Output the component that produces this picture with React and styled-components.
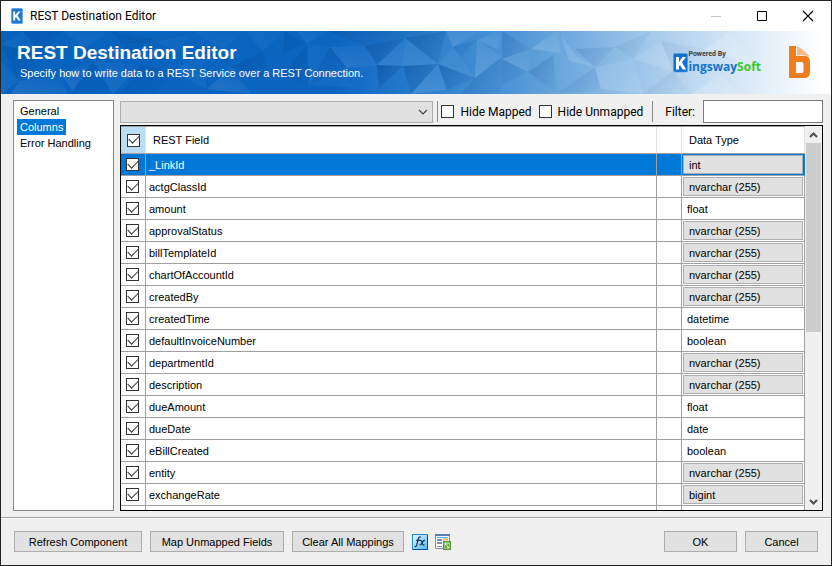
import { useState } from "react";
import styled, { createGlobalStyle } from "styled-components";

const sans = `"Liberation Sans", Arial, sans-serif`;
const segoe = `Roboto, "Segoe UI", sans-serif`;

const pages = ["General", "Columns", "Error Handling"];

const initialFields = [
  { name: "_LinkId", type: "int", sized: true },
  { name: "actgClassId", type: "nvarchar (255)", sized: true },
  { name: "amount", type: "float" },
  { name: "approvalStatus", type: "nvarchar (255)", sized: true },
  { name: "billTemplateId", type: "nvarchar (255)", sized: true },
  { name: "chartOfAccountId", type: "nvarchar (255)", sized: true },
  { name: "createdBy", type: "nvarchar (255)", sized: true },
  { name: "createdTime", type: "datetime" },
  { name: "defaultInvoiceNumber", type: "boolean" },
  { name: "departmentId", type: "nvarchar (255)", sized: true },
  { name: "description", type: "nvarchar (255)", sized: true },
  { name: "dueAmount", type: "float" },
  { name: "dueDate", type: "date" },
  { name: "eBillCreated", type: "boolean" },
  { name: "entity", type: "nvarchar (255)", sized: true },
  { name: "exchangeRate", type: "bigint", sized: true },
];

// points, then a white (positive) or navy (negative) opacity
const facets = [
  ["0,14 22,0 40,22", 0.05],
  ["0,14 40,22 18,50", -0.2],
  ["0,63 18,50 0,30", 0.08],
  ["18,50 60,44 66,63 10,63", 0.1],
  ["22,0 62,0 40,22", -0.22],
  ["60,44 92,30 72,60", 0.1],
  ["72,60 92,30 112,63", -0.2],
  ["62,0 110,0 84,16", 0.06],
  ["92,30 140,34 112,63", 0.08],
  ["110,0 150,8 130,26", -0.2],
  ["140,34 172,40 152,63 120,63", -0.2],
  ["172,40 200,22 206,58", 0.08],
  ["150,8 192,0 176,20", 0.05],
  ["118,12 200,0 150,12", -0.3],
  ["206,58 230,36 250,63", 0.1],
  ["192,0 244,0 222,18", 0.05],
  ["200,22 222,18 230,36", -0.25],
  ["230,36 262,20 270,52", -0.25],
  ["244,0 284,0 262,20", 0.06],
  ["284,0 306,13 282,22", -0.25],
  ["296,0 326,0 306,13", 0.08],
  ["306,13 329,16 352,56 308,54", 0.05],
  ["280,45 306,14 308,56", -0.3],
  ["329,16 346,37 308,55", -0.25],
  ["329,16 364,15 346,37", 0.12],
  ["326,0 364,15 440,0", -0.2],
  ["364,15 404,7 376,34", -0.35],
  ["364,15 376,34 346,37", 0.08],
  ["376,34 404,7 402,35", 0.1],
  ["376,34 402,35 378,57", -0.35],
  ["404,7 437,33 402,35", 0.1],
  ["404,7 445,0 437,33", -0.35],
  ["402,35 437,33 410,63", -0.3],
  ["437,33 446,59 410,63", 0.14],
  ["445,0 480,0 452,16", 0.14],
  ["452,16 476,9 460,26", -0.2],
  ["437,33 474,47 446,59", -0.3],
  ["452,16 474,47 437,33", 0.08],
  ["476,9 501,0 496,18", 0.14],
  ["476,9 501,26 474,47", 0.14],
  ["474,47 501,26 501,63 460,63", -0.2],
  ["501,0 530,18 501,28", -0.2],
  ["501,28 530,18 527,41", 0.14],
  ["527,41 501,54 501,28", -0.15],
  ["530,18 556,0 560,22", 0.18],
  ["527,41 552,24 556,63", -0.2],
  ["560,4 574,24 594,36 568,30", 0.18],
  ["594,36 614,16 574,18", -0.15],
  ["556,63 594,36 600,58", -0.15],
  ["594,36 632,28 642,63 600,58", 0.18],
  ["614,16 650,0 632,28", -0.1],
  ["632,28 660,10 672,40", 0.18],
  ["642,63 672,40 690,63", -0.1],
  ["660,10 704,18 672,40", -0.08],
  ["704,18 730,0 752,34", 0.25],
  ["690,63 720,44 740,63", 0.25],
];

export default function App() {
  const [page, setPage] = useState("Columns");
  const [checked, setChecked] = useState(initialFields.map(() => true));
  const [selected, setSelected] = useState(0);
  const allChecked = checked.every(Boolean);

  function toggle(index) {
    setChecked(checked.map((value, i) => (i === index ? !value : value)));
  }

  return (
    <>
      <GlobalStyle />
      <Window>
        <TitleBar>
          <AppIcon />
          <WindowTitle>REST Destination Editor</WindowTitle>
          <WindowButton aria-label="Minimize" $color="#c4c4c4">
            <svg width="12" height="12" viewBox="0 0 12 12">
              <path d="M1 6.5H11" stroke="currentColor" />
            </svg>
          </WindowButton>
          <WindowButton aria-label="Maximize">
            <svg width="12" height="12" viewBox="0 0 12 12">
              <path d="M1.5 1.5H10.5V10.5H1.5Z" stroke="currentColor" fill="none" />
            </svg>
          </WindowButton>
          <WindowButton aria-label="Close">
            <svg width="12" height="12" viewBox="0 0 12 12">
              <path d="M1 1L11 11M11 1L1 11" stroke="currentColor" strokeWidth="1.2" />
            </svg>
          </WindowButton>
        </TitleBar>

        <Banner>
          <BannerArt viewBox="0 0 830 63" preserveAspectRatio="none" aria-hidden="true">
            <defs>
              <linearGradient id="light" x1="0" x2="1" y1="1" y2="0">
                <stop offset="0" stopColor="#ffffff" />
                <stop offset="1" stopColor="#ffffff" stopOpacity="0.1" />
              </linearGradient>
              <linearGradient id="dark" x1="0" x2="1" y1="0" y2="1">
                <stop offset="0" stopColor="#003a80" />
                <stop offset="1" stopColor="#003a80" stopOpacity="0.1" />
              </linearGradient>
            </defs>
            {facets.map(([points, tone]) => (
              <polygon
                key={points}
                points={points}
                fill={tone > 0 ? "url(#light)" : "url(#dark)"}
                opacity={Math.abs(tone)}
              />
            ))}
          </BannerArt>
          <BannerText>
            <h1>REST Destination Editor</h1>
            <p>Specify how to write data to a REST Service over a REST Connection.</p>
          </BannerText>
          <Brand>
            <BrandMark />
            <div>
              <Powered>Powered By</Powered>
              <BrandName>
                ingsway<span>Soft</span>
              </BrandName>
            </div>
          </Brand>
          <BillLogo />
        </Banner>

        <Main>
          <PageList>
            {pages.map((name) => (
              <li key={name}>
                <PageButton $active={name === page} onClick={() => setPage(name)}>
                  {name}
                </PageButton>
              </li>
            ))}
          </PageList>

          <Content>
            <Toolbar>
              <SelectBox>
                <select aria-label="Source" />
                <svg width="10" height="6" viewBox="0 0 10 6">
                  <path d="M1 1L5 5L9 1" stroke="#444" strokeWidth="1.2" fill="none" />
                </svg>
              </SelectBox>
              <Divider />
              <CheckLabel>
                <CheckBox />
                Hide Mapped
              </CheckLabel>
              <CheckLabel>
                <CheckBox />
                Hide Unmapped
              </CheckLabel>
              <Divider $spaced />
              <FilterLabel htmlFor="filter">Filter:</FilterLabel>
              <FilterInput id="filter" />
            </Toolbar>

            <GridFrame>
              <GridArea>
                <Grid>
                  <colgroup>
                    <col width="25" />
                    <col />
                    <col width="25" />
                    <col width="123" />
                  </colgroup>
                  <thead>
                    <tr>
                      <HeadCell $picked>
                        <CheckBox
                          aria-label="Select all"
                          checked={allChecked}
                          onChange={() => setChecked(checked.map(() => !allChecked))}
                        />
                      </HeadCell>
                      <HeadCell>REST Field</HeadCell>
                      <HeadCell />
                      <HeadCell>Data Type</HeadCell>
                    </tr>
                  </thead>
                  <tbody>
                    {initialFields.map((field, index) => (
                      <Row
                        key={field.name}
                        $selected={index === selected}
                        onClick={() => setSelected(index)}
                      >
                        <CheckCell>
                          <CheckBox
                            aria-label={field.name}
                            checked={checked[index]}
                            onChange={() => toggle(index)}
                          />
                        </CheckCell>
                        <Cell>{field.name}</Cell>
                        <Cell />
                        <TypeCell $sized={field.sized}>
                          {field.sized ? <TypeButton>{field.type}</TypeButton> : field.type}
                        </TypeCell>
                      </Row>
                    ))}
                    <Row>
                      <Cell />
                      <Cell />
                      <Cell />
                      <Cell />
                    </Row>
                  </tbody>
                </Grid>
              </GridArea>
              <ScrollBar>
                <ScrollButton aria-label="Scroll up">
                  <svg width="9" height="6" viewBox="0 0 9 6">
                    <path d="M1 5L4.500 1.500L8 5" stroke="#505050" strokeWidth="2" fill="none" />
                  </svg>
                </ScrollButton>
                <ScrollTrack>
                  <ScrollThumb />
                </ScrollTrack>
                <ScrollButton aria-label="Scroll down">
                  <svg width="9" height="6" viewBox="0 0 9 6">
                    <path d="M1 1L4.500 4.500L8 1" stroke="#505050" strokeWidth="2" fill="none" />
                  </svg>
                </ScrollButton>
              </ScrollBar>
            </GridFrame>
          </Content>
        </Main>

        <Footer>
          <Button $width={128}>Refresh Component</Button>
          <Button $width={134}>Map Unmapped Fields</Button>
          <Button $width={112}>Clear All Mappings</Button>
          <IconGroup>
            <IconButton aria-label="Expression">
              <FxIcon />
            </IconButton>
            <IconButton aria-label="Mapping document">
              <DocumentIcon />
            </IconButton>
          </IconGroup>
          <Button $width={73}>OK</Button>
          <Button $width={73}>Cancel</Button>
        </Footer>
      </Window>
    </>
  );
}

function CheckBox(props) {
  return <Box type="checkbox" {...props} />;
}

function AppIcon() {
  return (
    <svg width="12" height="16" viewBox="0 0 12 16">
      <rect x="0.300" y="0.300" width="11.400" height="15.400" rx="1.500" fill="#1979d2" stroke="#7fb6e8" strokeWidth="0.600" />
      <path d="M2.200 3.500H4.200V7.200L7.200 3.500H9.600L6.500 7.500L9.800 12.500H7.300L5 9L4.200 10V12.500H2.200Z" fill="#fff" />
    </svg>
  );
}

function BrandMark() {
  return (
    <svg width="15" height="20" viewBox="0 0 15 20">
      <rect x="0.500" y="0.500" width="14" height="18.500" rx="1.500" fill="#1272cf" stroke="#4d97dd" strokeWidth="0.600" />
      <path d="M3 4H6V9L9.500 4H13L9 9.500L13.200 16.500H9.700L7 12L6 13.200V16.500H3Z" fill="#fff" />
    </svg>
  );
}

function BillLogo() {
  return (
    <BillMark width="21" height="33" viewBox="0 0 21 33">
      <path
        fillRule="evenodd"
        fill="#f07d1a"
        d="M0 0H7V10H17Q21 11 21 15.500V26Q21 32 15 32H0ZM7 16V27H12.500Q14.500 27 14.500 25.500V18Q14.500 16 12.500 16Z"
      />
      <path d="M8 0.500Q12 1 21 10.500Q14 8 8 9.500Z" fill="#f9b98a" />
    </BillMark>
  );
}

function FxIcon() {
  return (
    <svg width="16" height="16" viewBox="0 0 16 16">
      <defs>
        <linearGradient id="fx" x1="0" x2="1" y1="0" y2="1">
          <stop offset="0" stopColor="#e8fbff" />
          <stop offset="1" stopColor="#4fb6f2" />
        </linearGradient>
      </defs>
      <rect x="0.500" y="0.500" width="15" height="15" fill="url(#fx)" stroke="#2b86d0" />
      <path d="M15.500 1V15.500H1" stroke="#0b4a9c" fill="none" />
      <path
        d="M8.800 3.200Q7 2.200 6.200 5L4.700 11Q4 13.200 2.600 12.400M4.200 6.300H8M8 6.500Q9.300 5.900 9.800 7.500L10.500 10Q11 11.500 12.400 10.500M12.900 6.400Q11.500 6.200 10.200 8.500Q9 11.200 7.500 10.700"
        stroke="#17325c"
        strokeWidth="1.200"
        fill="none"
      />
    </svg>
  );
}

function DocumentIcon() {
  return (
    <svg width="16" height="16" viewBox="0 0 16 16">
      <path d="M0.500 0.500H14.500V14.500H0.500Z" fill="#fff" stroke="#8192ad" />
      <path d="M0 1H15" stroke="#5c7dac" strokeWidth="2" />
      <path d="M2 3.500H13" stroke="#5ea7e0" />
      <path d="M2 6H7M2 9H7" stroke="#6f8db8" strokeWidth="2" />
      <path d="M2 12.500H7" stroke="#7e96b8" />
      <path d="M8 5.500H13" stroke="#f0a848" strokeWidth="2" />
      <rect x="8.800" y="7.800" width="6.500" height="7.500" fill="#e9f6df" stroke="#55982d" strokeWidth="1.500" />
      <path d="M10.500 13.500L13.500 10M11 10H13.500V12.500M10.500 11V13.500H12.500" stroke="#5aa52e" fill="none" />
    </svg>
  );
}

const GlobalStyle = createGlobalStyle`
  * {
    box-sizing: border-box;
  }
  body {
    margin: 0;
    font-family: ${sans};
    font-size: 11px;
    color: #000000;
  }
  button, input, select {
    font: inherit;
    color: inherit;
    margin: 0;
    padding: 0;
    border-radius: 0;
  }
`;

const Window = styled.div`
  height: 100vh;
  display: flex;
  flex-direction: column;
  background-color: #f0f0f0;
  border: 1px solid #222222;
`;

const TitleBar = styled.header`
  height: 30px;
  flex-shrink: 0;
  display: flex;
  align-items: center;
  padding-left: 10px;
  background-color: #ffffff;
`;

const WindowTitle = styled.span`
  flex: 1;
  margin-left: 7px;
  font-family: ${segoe};
  font-size: 12px;
`;

const WindowButton = styled.button`
  width: 46px;
  height: 28px;
  display: flex;
  align-items: center;
  justify-content: center;
  border: none;
  background: none;
  color: ${(props) => props.$color || "#000000"};
`;

const Banner = styled.section`
  height: 63px;
  flex-shrink: 0;
  position: relative;
  display: flex;
  align-items: center;
  padding: 0 21px 0 16px;
  background: linear-gradient(
    90deg,
    #0762bd 0%,
    #0b66c2 40%,
    #287bcb 50%,
    #4f96d6 62%,
    #82b5e3 72%,
    #b8d5ef 82%,
    #dfecf8 91%,
    #ffffff 99%
  );
`;

const BannerArt = styled.svg`
  position: absolute;
  inset: 0;
  width: 100%;
  height: 100%;
`;

const BannerText = styled.div`
  position: relative;
  flex: 1;
  color: #ffffff;
  h1 {
    margin: 0;
    font-size: 19px;
    line-height: 20px;
  }
  p {
    margin: 2px 0 2px 3px;
    line-height: 16px;
  }
`;

const Brand = styled.div`
  position: relative;
  display: flex;
  align-items: center;
  margin-right: 28px;
  font-weight: 700;
`;

const BillMark = styled.svg`
  position: relative;
`;

const Powered = styled.div`
  font-family: ${segoe};
  font-size: 7px;
  line-height: 8px;
  color: #3c3c3c;
`;

const BrandName = styled.div`
  font-family: "Open Sans", "Segoe UI", sans-serif;
  font-size: 12px;
  line-height: 17px;
  color: #1272cf;
  span {
    color: #3fc51f;
  }
`;

const Main = styled.main`
  flex: 1;
  min-height: 0;
  display: flex;
  gap: 6px;
  padding: 6px 8px 6px 12px;
`;

const PageList = styled.ul`
  width: 101px;
  margin: 0;
  padding: 2px 3px;
  list-style: none;
  background-color: #ffffff;
  border: 1px solid #828790;
`;

const PageButton = styled.button`
  display: block;
  height: 16px;
  padding: 0 3px;
  border: none;
  background-color: ${(props) => (props.$active ? "#0078d7" : "transparent")};
  color: ${(props) => (props.$active ? "#ffffff" : "#000000")};
`;

const Content = styled.div`
  flex: 1;
  min-width: 0;
  display: flex;
  flex-direction: column;
  gap: 2px;
`;

const Toolbar = styled.div`
  height: 23px;
  flex-shrink: 0;
  display: flex;
  align-items: center;
`;

const SelectBox = styled.div`
  flex: 1;
  height: 22px;
  display: flex;
  align-items: center;
  margin-right: 4px;
  padding-right: 4px;
  background-color: #e1e1e1;
  border: 1px solid #adadad;
  select {
    flex: 1;
    min-width: 0;
    height: 20px;
    appearance: none;
    border: none;
    background: none;
  }
`;

const Divider = styled.div`
  width: 1px;
  height: 21px;
  margin-left: ${(props) => (props.$spaced ? 5 : 0)}px;
  background-color: #8c8c8c;
`;

const CheckLabel = styled.label`
  display: flex;
  align-items: center;
  gap: 6px;
  margin-left: 3px;
  margin-right: 4px;
  font-family: ${segoe};
  font-size: 12px;
`;

const Box = styled.input`
  appearance: none;
  width: 13px;
  height: 13px;
  display: grid;
  place-items: center;
  background-color: #ffffff;
  border: 1px solid #333333;
  &:checked::after {
    content: "";
    width: 5px;
    height: 9px;
    margin-top: -4px;
    border: solid #333333;
    border-width: 0 1px 1px 0;
    transform: rotate(45deg);
  }
`;

const FilterLabel = styled.label`
  margin: 0 8px 0 12px;
  font-family: ${segoe};
  font-size: 12px;
`;

const FilterInput = styled.input`
  width: 120px;
  height: 23px;
  border: 1px solid #7a7a7a;
  background-color: #ffffff;
`;

const GridFrame = styled.div`
  flex: 1;
  min-height: 0;
  display: flex;
  background-color: #ffffff;
  border: 1px solid #000000;
`;

const GridArea = styled.div`
  flex: 1;
  overflow: hidden;
  border-top: 1px solid #a0a0a0;
`;

const Grid = styled.table`
  width: 100%;
  table-layout: fixed;
  border-collapse: separate;
  border-spacing: 0;
`;

const HeadCell = styled.th`
  height: 27px;
  padding: 0 0 0 7px;
  text-align: left;
  font-weight: 400;
  background-color: ${(props) => (props.$picked ? "#bcdcf4" : "#ffffff")};
  border-right: 1px solid #e2e2e2;
  border-bottom: 1px solid #a0a0a0;
  ${(props) => props.$picked && "padding-left: 6px;"}
`;

const Cell = styled.td`
  height: 22px;
  padding: 0 0 0 3px;
  border-right: 1px solid #a0a0a0;
  border-bottom: 1px solid #a0a0a0;
`;

const CheckCell = styled(Cell)`
  padding-left: 5px;
`;

const TypeCell = styled(Cell)`
  padding: ${(props) => (props.$sized ? "0 1px" : "0 0 0 5px")};
`;

const TypeButton = styled.button`
  display: block;
  width: 100%;
  height: 19px;
  padding-left: 5px;
  text-align: left;
  background-color: #e1e1e1;
  border: 1px solid #adadad;
  color: #000000;
`;

const Row = styled.tr`
  background-color: ${(props) => (props.$selected ? "#0078d7" : "#ffffff")};
  color: ${(props) => (props.$selected ? "#ffffff" : "#000000")};
  ${TypeCell} {
    ${(props) => props.$selected && "border-right-color: #0078d7;"}
  }
`;

const ScrollBar = styled.div`
  width: 17px;
  display: flex;
  flex-direction: column;
  background-color: #f0f0f0;
`;

const ScrollButton = styled.button`
  height: 17px;
  display: flex;
  align-items: center;
  justify-content: center;
  border: none;
  background: none;
`;

const ScrollTrack = styled.div`
  flex: 1;
`;

const ScrollThumb = styled.div`
  height: 54%;
  margin: 0 1px;
  background-color: #cdcdcd;
`;

const Footer = styled.footer`
  height: 48px;
  flex-shrink: 0;
  display: flex;
  align-items: center;
  gap: 8px;
  padding: 0 13px;
  border-top: 1px solid #a0a0a0;
  box-shadow: inset 0 1px #ffffff;
`;

const Button = styled.button`
  width: ${(props) => props.$width}px;
  height: 21px;
  background-color: #e1e1e1;
  border: 1px solid #adadad;
`;

const IconGroup = styled.div`
  flex: 1;
  display: flex;
  gap: 7px;
`;

const IconButton = styled.button`
  display: flex;
  border: none;
  background: none;
`;
